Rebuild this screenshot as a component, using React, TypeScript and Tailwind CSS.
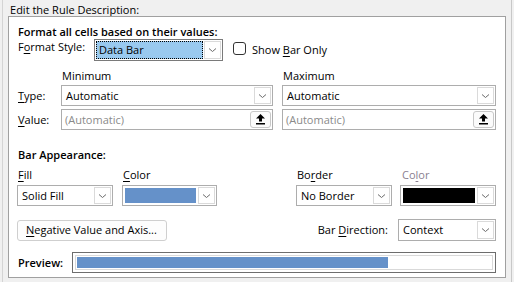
import React from 'react';

const font = { fontFamily: '"Open Sans", "Noto Sans", sans-serif' };

const Chevron: React.FC = () => (
  <svg width="9" height="6" viewBox="0 0 9 6" fill="none">
    <path d="M1 1.5 L4.5 4.5 L8 1.5" stroke="#6b6b6b" strokeWidth="1" />
  </svg>
);

const ArrowButton: React.FC = () => (
  <div className="my-px mr-px flex w-[17px] shrink-0 items-center justify-center border border-[#dadada] bg-white">
    <Chevron />
  </div>
);

const UploadIcon: React.FC = () => (
  <svg width="9" height="11" viewBox="0 0 9 11">
    <path d="M4.5 0 L9 4.5 L6 4.5 L6 7.5 L3 7.5 L3 4.5 L0 4.5 Z" fill="#000" />
    <rect x="0" y="9" width="9" height="1.5" fill="#000" />
  </svg>
);

type SelectProps = {
  value?: string;
  swatch?: string;
  className: string;
};

const Select: React.FC<SelectProps> = ({ value, swatch, className }) => (
  <div className={`flex border border-[#adadad] bg-white ${className}`}>
    {swatch ? (
      <div className="flex flex-1 items-center pl-[2px] pr-[2px]">
        <div className={`h-[15px] w-full ${swatch}`} />
      </div>
    ) : (
      <div className="flex flex-1 items-center pl-[4px] text-black">{value}</div>
    )}
    <ArrowButton />
  </div>
);

const ValueInput: React.FC<{ className: string }> = ({ className }) => (
  <div className={`flex border border-[#adadad] bg-white ${className}`}>
    <div className="flex flex-1 items-center pl-[3px] text-[#8a8a8a]">(Automatic)</div>
    <div className="my-px mr-px flex w-[21px] items-center justify-center rounded-[3px] border border-[#c8c8c8] bg-[#fbfbfb]">
      <UploadIcon />
    </div>
  </div>
);

const U: React.FC<{ children: React.ReactNode }> = ({ children }) => (
  <span className="underline underline-offset-2">{children}</span>
);

export default function App() {
  return (
    <div
      className="flex h-[282px] w-[514px] overflow-hidden bg-[#f0f0f0] text-[11px] leading-4 text-black"
      style={font}
    >
      <div className="w-[2px] shrink-0" />
      <div className="w-px shrink-0 bg-[#d4d4d4]" />
      <div className="flex w-[508px] shrink-0 flex-col">
        <div className="h-4 pl-[7px] pt-[2px] leading-4">
          <U>E</U>dit the Rule Description:
        </div>
        <div className="ml-[5px] mt-0 flex h-[262px] w-[498px] flex-col border border-[#a0a0a0] bg-white pl-[8px]">
          <div className="mt-[7px] h-[15px] pl-px font-semibold leading-[15px]">
            Format all cells based on their values:
          </div>

          <div className="flex h-[22px]">
            <div className="w-[77px] pl-px">
              F<U>o</U>rmat Style:
            </div>
            <div className="flex w-[129px] border border-[#7a7a7a] bg-white">
              <div className="m-px flex flex-1 items-center border border-dotted border-black bg-[#99c9ef] pl-[2px]">
                Data Bar
              </div>
              <ArrowButton />
            </div>
            <div className="ml-[10px] mt-[3px] h-[13px] w-[13px] rounded-[3px] border border-[#333]" />
            <div className="ml-[6px] mt-[3px]">
              Show <U>B</U>ar Only
            </div>
          </div>

          <div className="mt-[7px] flex h-4">
            <div className="w-[45px]" />
            <div className="w-[221px]">Minimum</div>
            <div>Maximum</div>
          </div>

          <div className="mt-px flex h-[21px]">
            <div className="flex w-[44px] items-center pl-px">
              <U>T</U>ype:
            </div>
            <Select value="Automatic" className="w-[212px]" />
            <Select value="Automatic" className="ml-[9px] w-[214px]" />
          </div>

          <div className="mt-[3px] flex h-[21px]">
            <div className="flex w-[44px] items-center pl-px">
              <U>V</U>alue:
            </div>
            <ValueInput className="w-[212px]" />
            <ValueInput className="ml-[9px] w-[214px]" />
          </div>

          <div className="mt-[17px] h-4 pl-px font-semibold">Bar Appearance:</div>

          <div className="mt-[4px] flex h-4">
            <div className="w-[105px] pl-px">
              <U>F</U>ill
            </div>
            <div className="w-[174px] pl-px">
              <U>C</U>olor
            </div>
            <div className="w-[104px] pl-px">
              Bo<U>r</U>der
            </div>
            <div className="pl-[2px] text-[#8a7f90]">
              Co<U>l</U>or
            </div>
          </div>

          <div className="mt-[2px] flex h-[21px]">
            <Select value="Solid Fill" className="w-[96px]" />
            <Select swatch="bg-[#6591c9]" className="ml-[9px] w-[95px]" />
            <Select value="No Border" className="ml-[79px] w-[96px]" />
            <Select swatch="bg-black" className="ml-[8px] w-[96px]" />
          </div>

          <div className="mt-[13px] flex h-[22px] items-center">
            <div className="flex h-[21px] w-[150px] items-center rounded-[3px] border border-[#cfcfcf] bg-[#fdfdfd] pl-[8px]">
              <U>N</U>egative Value and Axis...
            </div>
            <div className="ml-auto mr-[10px]">
              Bar <U>D</U>irection:
            </div>
            <Select value="Context" className="mr-[9px] h-[22px] w-[98px]" />
          </div>

          <div className="mt-[11px] flex h-[21px] items-center">
            <div className="w-[55px] pl-px font-semibold">Preview:</div>
            <div className="flex h-[21px] w-[424px] border border-[#6d6d6d] bg-white p-[2px]">
              <div className="flex flex-1 border border-[#d9d9d9] p-px">
                <div className="h-full w-[311px] bg-[#6591c9]" />
              </div>
            </div>
          </div>
        </div>
      </div>
      <div className="w-px shrink-0 bg-[#c8c8c8]" />
    </div>
  );
}
